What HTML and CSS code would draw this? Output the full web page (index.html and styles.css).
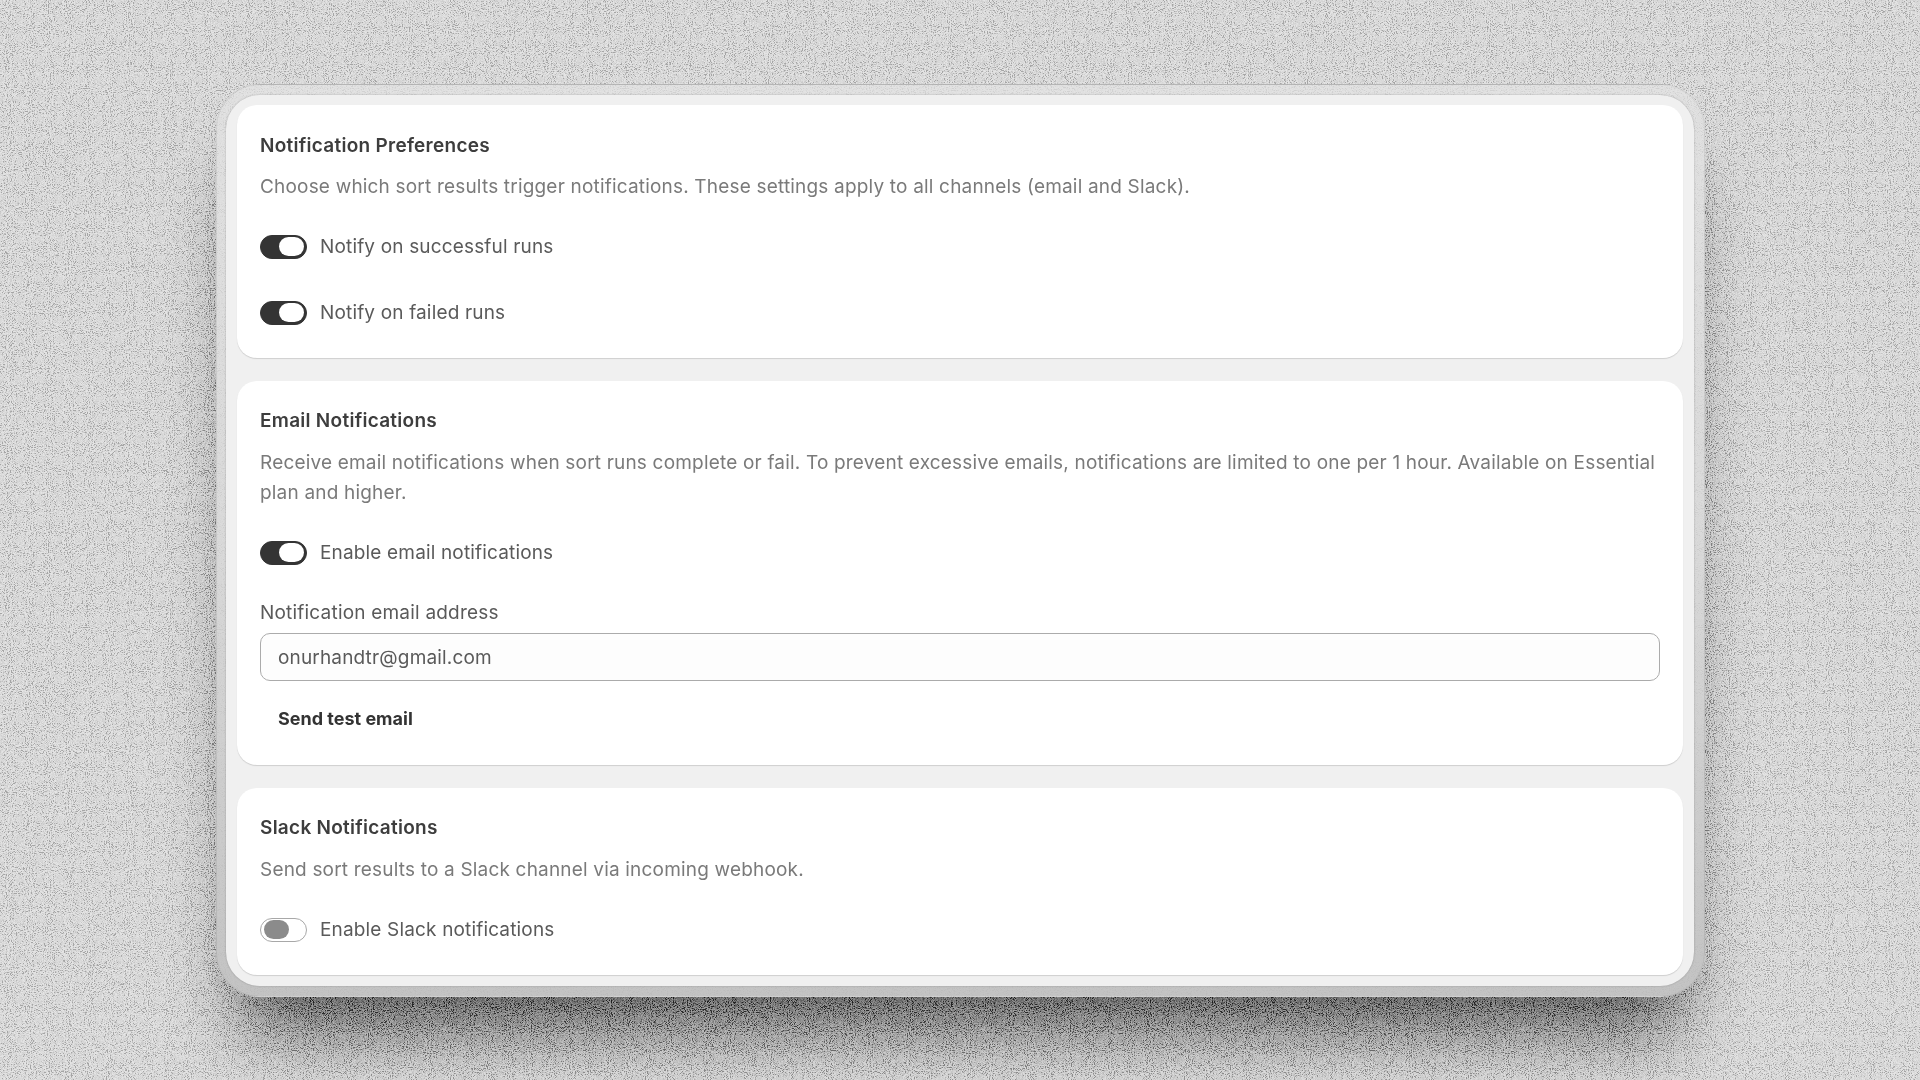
FILE: index.html
```html
<!DOCTYPE html>
<html lang="en">

<head>
    <meta charset="UTF-8">
    <meta name="viewport" content="width=device-width, initial-scale=1.0">
    <title>Notification Settings</title>
    <link rel="stylesheet" href="styles.css">
</head>

<body>
    <svg class="noise" width="1920" height="1080" aria-hidden="true">
        <filter id="grain" x="0" y="0" width="100%" height="100%">
            <feTurbulence type="fractalNoise" baseFrequency="0.95" numOctaves="3" seed="11" />
            <feColorMatrix type="matrix" values="1.8 1.8 1.8 0 -2.2  1.8 1.8 1.8 0 -2.2  1.8 1.8 1.8 0 -2.2  0 0 0 0 1" />
        </filter>
        <rect width="1920" height="1080" filter="url(#grain)" />
    </svg>

    <div class="window-wrap">
        <main class="window">
            <section class="card card-prefs">
                <h2>Notification Preferences</h2>
                <p class="desc">Choose which sort results trigger notifications. These settings apply to all channels (email and Slack).</p>
                <div class="toggle-row">
                    <span class="toggle on"></span>
                    <span class="toggle-label">Notify on successful runs</span>
                </div>
                <div class="toggle-row second">
                    <span class="toggle on"></span>
                    <span class="toggle-label">Notify on failed runs</span>
                </div>
            </section>

            <section class="card card-email">
                <h2>Email Notifications</h2>
                <p class="desc">Receive email notifications when sort runs complete or fail. To prevent excessive emails, notifications are limited to one per 1 hour. Available on Essential plan and higher.</p>
                <div class="toggle-row">
                    <span class="toggle on"></span>
                    <span class="toggle-label">Enable email notifications</span>
                </div>
                <label class="field-label" for="notifyEmail">Notification email address</label>
                <input type="text" id="notifyEmail" class="field-input" value="onurhandtr@gmail.com">
                <button type="button" class="test-btn">Send test email</button>
            </section>

            <section class="card card-slack">
                <h2>Slack Notifications</h2>
                <p class="desc">Send sort results to a Slack channel via incoming webhook.</p>
                <div class="toggle-row">
                    <span class="toggle"></span>
                    <span class="toggle-label">Enable Slack notifications</span>
                </div>
            </section>
        </main>
    </div>
</body>

</html>
```

FILE: styles.css
```css
* {
    box-sizing: border-box;
}

html,
body {
    margin: 0;
    height: 100%;
}

body {
    position: relative;
    display: flex;
    align-items: center;
    justify-content: center;
    height: 1080px;
    overflow: hidden;
    background: #cdcdcd;
    font-family: Inter, "Noto Sans", sans-serif;
}

/* grain over the backdrop and the drop shadow, under the window */
.noise {
    position: absolute;
    top: 0;
    left: 0;
    z-index: 1;
    mix-blend-mode: soft-light;
}

.window-wrap {
    position: relative;
    width: 1468px;
}

/* drop shadow, goes under the grain */
.window-wrap::before {
    content: "";
    position: absolute;
    inset: -11px -11px -11px -10px;
    z-index: 0;
    border-radius: 44px;
    box-shadow: 0 62px 70px -26px rgba(0, 0, 0, 0.66), 0 20px 30px -14px rgba(0, 0, 0, 0.14);
}

/* translucent ring round the window, lets some grain through */
.window-wrap::after {
    content: "";
    position: absolute;
    inset: -11px -11px -11px -10px;
    z-index: 1;
    border: 1px solid rgba(0, 0, 0, 0.07);
    border-radius: 44px;
    background: linear-gradient(rgba(226, 226, 226, 0.72), rgba(216, 216, 216, 0.8) 50%, rgba(192, 192, 192, 0.9));
}

.window {
    position: relative;
    z-index: 2;
    display: flex;
    flex-direction: column;
    gap: 23px;
    padding: 10px 11px 11px 11px;
    border-radius: 34px;
    background: #f0f0f0;
    box-shadow: 0 0 2px rgba(0, 0, 0, 0.25);
    filter: blur(0.4px);
}

.card {
    padding: 0 23px;
    border-radius: 20px;
    background: #fff;
    box-shadow: 0 1px 1px rgba(0, 0, 0, 0.14);
}

.card-prefs {
    height: 253px;
    padding-top: 28px;
}

.card-prefs .desc {
    margin-top: 13px;
}

.card-email {
    height: 384px;
    padding-top: 27px;
}

.card-slack {
    height: 187px;
    padding-top: 27px;
}

h2 {
    margin: 0;
    font-size: 19px;
    font-weight: 600;
    line-height: 26px;
    letter-spacing: 0.27px;
    color: #3d3d3d;
}

.desc {
    margin: 14px 0 0;
    font-size: 19px;
    line-height: 30px;
    letter-spacing: 0.185px;
    color: #7a7a7a;
}

.toggle-row {
    display: flex;
    align-items: center;
    gap: 13px;
    height: 24px;
    margin-top: 33px;
}

.toggle-row.second {
    margin-top: 42px;
}

.toggle {
    position: relative;
    width: 47px;
    height: 24px;
    border: 1.5px solid #a8a8a8;
    border-radius: 12px;
    background: #fff;
}

.toggle::after {
    content: "";
    position: absolute;
    top: 1px;
    left: 2.5px;
    width: 25px;
    height: 19px;
    border-radius: 9.5px;
    background: #8b8b8b;
}

.toggle.on {
    border-color: #343434;
    background: #343434;
}

.toggle.on::after {
    left: 17.5px;
    background: #fff;
}

.toggle-label {
    font-size: 19px;
    letter-spacing: 0.16px;
    color: #5a5a5a;
}

.field-label {
    display: block;
    margin-top: 35px;
    font-size: 19px;
    line-height: 26px;
    letter-spacing: 0.2px;
    color: #5a5a5a;
}

.field-input {
    display: block;
    width: 100%;
    height: 48px;
    margin-top: 7px;
    padding: 1px 17px 0;
    border: 1.5px solid #ababab;
    border-radius: 10px;
    outline: none;
    background: #fdfdfd;
    font-family: inherit;
    font-size: 19px;
    letter-spacing: 0.16px;
    color: #5a5a5a;
}

.test-btn {
    display: block;
    margin-top: 25px;
    padding: 0 18px;
    border: none;
    background: none;
    font-family: inherit;
    font-size: 18px;
    font-weight: 700;
    line-height: 26px;
    color: #333;
}
```
